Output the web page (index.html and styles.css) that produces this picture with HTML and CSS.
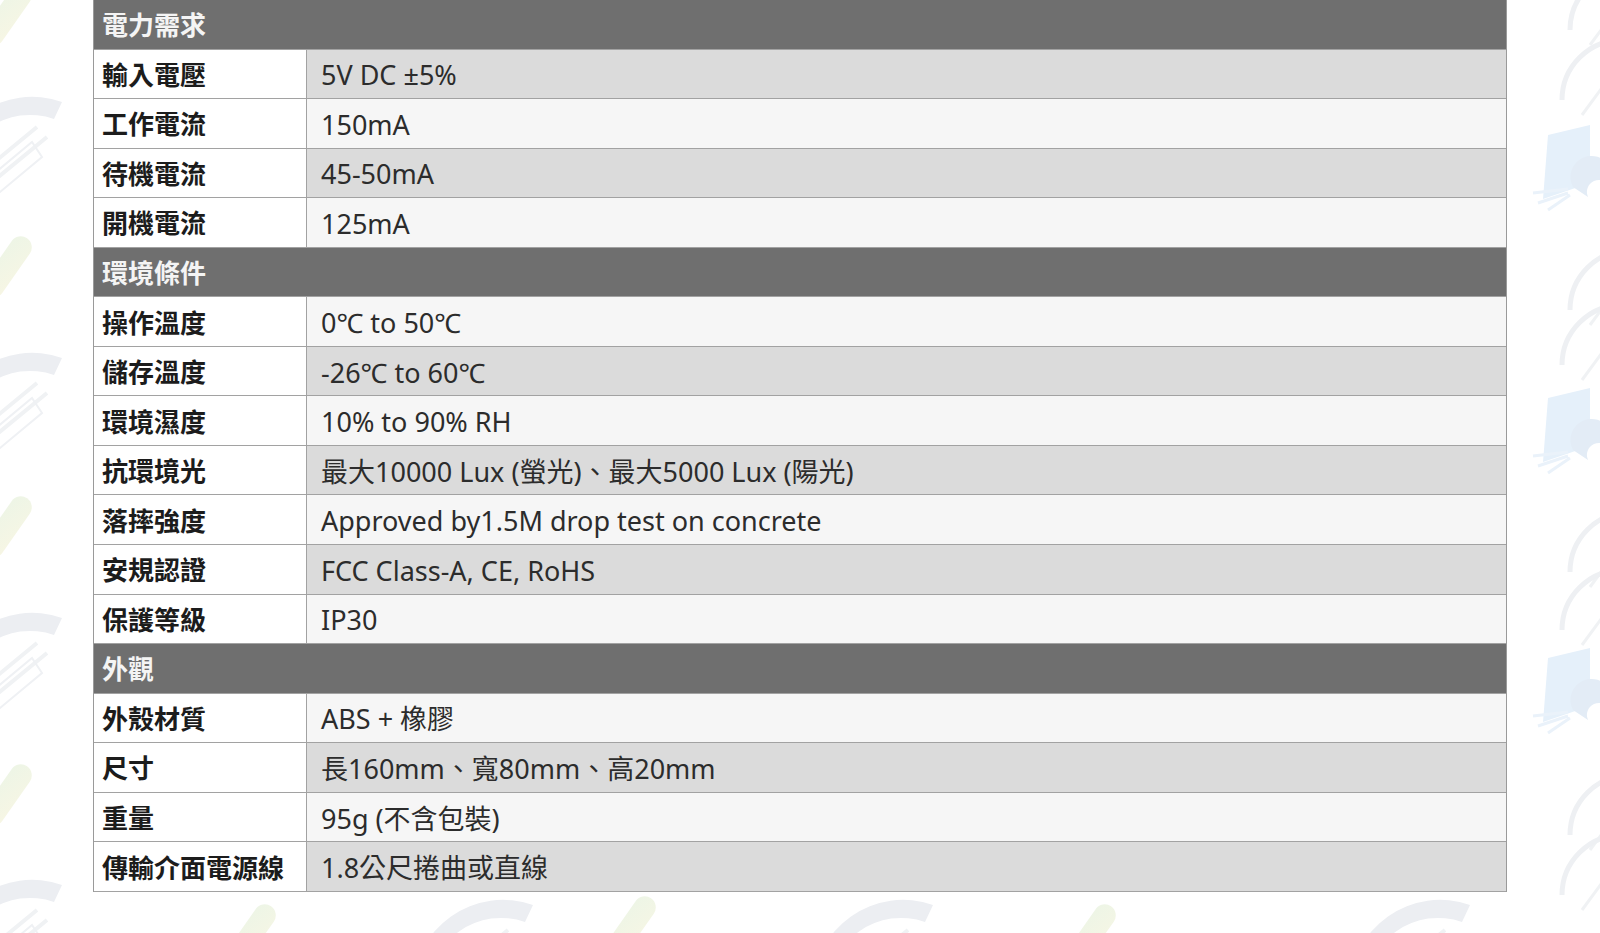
FILE: index.html
```html
<!DOCTYPE html>
<html lang="zh-Hant">
<head>
<meta charset="utf-8">
<title>規格表</title>
<link rel="stylesheet" href="styles.css">
</head>
<body>
<svg class="watermark" width="1600" height="933" aria-hidden="true">
  <defs>
    <linearGradient id="pillg" x1="0" y1="0" x2="1" y2="1">
      <stop offset="0" stop-color="#edf5e6"/>
      <stop offset="1" stop-color="#f7f6e4"/>
    </linearGradient>
    <g id="fan">
      <path d="M0 90 A90 90 0 0 1 120 5 L112 22 A72 72 0 0 0 16 90 Z" fill="#eceef2"/>
      <path d="M10 100 L95 30 M20 110 L105 40" stroke="#f0f2f4" stroke-width="4" fill="none"/>
      <path d="M30 95 L90 45 L100 60 L40 110 Z" fill="none" stroke="#eff1f4" stroke-width="2"/>
    </g>
    <g id="pill">
      <rect x="0" y="0" width="22" height="70" rx="11" fill="url(#pillg)" transform="rotate(35 11 35)"/>
    </g>
    <g id="book">
      <path d="M20 10 L62 0 L62 58 L15 74 Z" fill="#e5f0fa"/>
      <path d="M45 62 A18 18 0 0 1 82 42 L82 62 A10 10 0 0 0 60 72 Z" fill="#e3ecf6"/>
      <path d="M5 68 L40 64 M10 78 L40 68 M20 85 L42 70" stroke="#eaf2fa" stroke-width="3"/>
    </g>
    <g id="arc">
      <path d="M0 60 A60 60 0 0 1 60 0" fill="none" stroke="#eef0f3" stroke-width="5"/>
      <path d="M20 75 L62 18" stroke="#f0f2f4" stroke-width="3"/>
    </g>
  </defs>
  <use href="#pill" x="-4" y="-20"/>
  <use href="#fan" x="-58" y="97"/>
  <use href="#pill" x="-4" y="232"/>
  <use href="#fan" x="-58" y="353"/>
  <use href="#pill" x="-4" y="492"/>
  <use href="#fan" x="-58" y="613"/>
  <use href="#pill" x="-4" y="760"/>
  <use href="#fan" x="-58" y="880"/>
  <use href="#arc" x="1570" y="-30"/>
  <use href="#arc" x="1562" y="40"/>
  <use href="#book" x="1528" y="125"/>
  <use href="#arc" x="1570" y="250"/>
  <use href="#arc" x="1562" y="305"/>
  <use href="#book" x="1528" y="388"/>
  <use href="#arc" x="1570" y="512"/>
  <use href="#arc" x="1562" y="570"/>
  <use href="#book" x="1528" y="648"/>
  <use href="#arc" x="1570" y="775"/>
  <use href="#arc" x="1562" y="835"/>
  <use href="#fan" x="413" y="900"/>
  <use href="#pill" x="620" y="892"/>
  <use href="#fan" x="813" y="900"/>
  <use href="#fan" x="1350" y="900"/>
  <use href="#pill" x="240" y="900"/>
  <use href="#pill" x="1080" y="900"/>
</svg>

<div class="spec">
  <div class="sec">電力需求</div>
  <div class="lab">輸入電壓</div><div class="val dark">5V DC ±5%</div>
  <div class="lab">工作電流</div><div class="val light">150mA</div>
  <div class="lab">待機電流</div><div class="val dark">45-50mA</div>
  <div class="lab">開機電流</div><div class="val light">125mA</div>

  <div class="sec">環境條件</div>
  <div class="lab">操作溫度</div><div class="val light">0℃ to 50℃</div>
  <div class="lab">儲存溫度</div><div class="val dark">-26℃ to 60℃</div>
  <div class="lab">環境濕度</div><div class="val light">10% to 90% RH</div>
  <div class="lab">抗環境光</div><div class="val dark">最大10000 Lux (螢光)、最大5000 Lux (陽光)</div>
  <div class="lab">落摔強度</div><div class="val light">Approved by1.5M drop test on concrete</div>
  <div class="lab">安規認證</div><div class="val dark">FCC Class-A, CE, RoHS</div>
  <div class="lab">保護等級</div><div class="val light">IP30</div>

  <div class="sec">外觀</div>
  <div class="lab">外殼材質</div><div class="val light">ABS + 橡膠</div>
  <div class="lab">尺寸</div><div class="val dark">長160mm、寬80mm、高20mm</div>
  <div class="lab">重量</div><div class="val light">95g (不含包裝)</div>
  <div class="lab">傳輸介面電源線</div><div class="val dark">1.8公尺捲曲或直線</div>
</div>
</body>
</html>
```

FILE: styles.css
```css
html, body {
  margin: 0;
  padding: 0;
  background: #ffffff;
}

body {
  position: relative;
  width: 1600px;
  height: 933px;
  overflow: hidden;
  font-family: "Noto Sans", "Noto Sans CJK TC", sans-serif;
}

.watermark {
  position: absolute;
  left: 0;
  top: 0;
  z-index: 0;
}

.spec {
  position: relative;
  z-index: 1;
  margin-left: 93px;
  width: 1414px;
  display: grid;
  grid-template-columns: 213px 1fr;
  grid-auto-rows: 49.56px;
  box-sizing: border-box;
  border-left: 1px solid #9a9a9a;
  border-right: 1px solid #9a9a9a;
}

.sec, .lab, .val {
  box-sizing: border-box;
  border-bottom: 1px solid #a2a2a2;
  display: flex;
  align-items: center;
  padding-top: 2px;
  font-size: 26px;
  line-height: 1;
  white-space: nowrap;
}

.sec {
  grid-column: 1 / -1;
  background: #6f6f6f;
  color: #f4f4f4;
  font-weight: 700;
  padding-left: 8px;
}

.lab {
  background: #ffffff;
  color: #1c1c1c;
  font-weight: 700;
  padding-left: 8px;
  border-right: 1px solid #a2a2a2;
}

.val {
  color: #2c2c2c;
  font-weight: 400;
  font-size: 27px;
  padding-left: 14px;
}

.val.dark { background: #dbdbdb; }
.val.light { background: #f6f6f6; }
```
